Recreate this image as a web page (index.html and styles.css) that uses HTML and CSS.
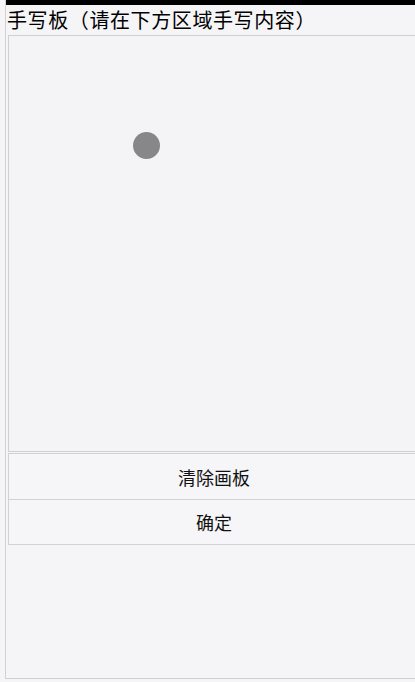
FILE: index.html
```html
<!DOCTYPE html>
<html lang="zh">
<head>
<meta charset="utf-8">
<title>手写板</title>
<link rel="stylesheet" href="styles.css">
</head>
<body>
<div class="page">
  <div class="topbar"></div>
  <div class="title">手写板（请在下方区域手写内容）</div>
  <div class="board">
    <span class="dot"></span>
  </div>
  <div class="actions">
    <button class="btn" type="button">清除画板</button>
    <button class="btn" type="button">确定</button>
  </div>
</div>
</body>
</html>
```
FILE: styles.css
```css
html, body {
  margin: 0;
  padding: 0;
  overflow: hidden;
  background: #f5f4f7;
}
.page {
  margin-left: 5px;
  width: 420px;
  height: 678px;
  border-left: 1px solid #d2d2d4;
  border-bottom: 1px solid #cfcfd1;
  box-sizing: content-box;
  font-family: "Noto Sans CJK SC", "Noto Sans", sans-serif;
  color: #111;
  overflow: hidden;
}
.topbar {
  height: 5px;
  background: #000;
}
.title {
  font-size: 20px;
  line-height: 29px;
  height: 29px;
  padding-left: 1px;
  white-space: nowrap;
  letter-spacing: 0.6px;
  color: #000;
}
.board {
  position: relative;
  margin: 1px 0 0 2px;
  height: 415px;
  border: 1px solid #d0d0d2;
  background: #f4f4f6;
}
.dot {
  position: absolute;
  left: 124px;
  top: 96px;
  width: 27px;
  height: 27px;
  border-radius: 50%;
  background: #87878a;
}
.actions {
  display: flex;
  flex-direction: column;
  margin: 1px 0 0 2px;
}
.btn {
  height: 46px;
  margin: 0;
  padding: 0;
  border: 1px solid #d2d2d4;
  border-bottom: none;
  background: #f6f5f8;
  font-family: "Noto Sans CJK SC", "Noto Sans", sans-serif;
  font-size: 18px;
  color: #111;
  text-align: center;
  width: 412px;
}
.btn:last-child {
  border-bottom: 1px solid #d2d2d4;
}
```
